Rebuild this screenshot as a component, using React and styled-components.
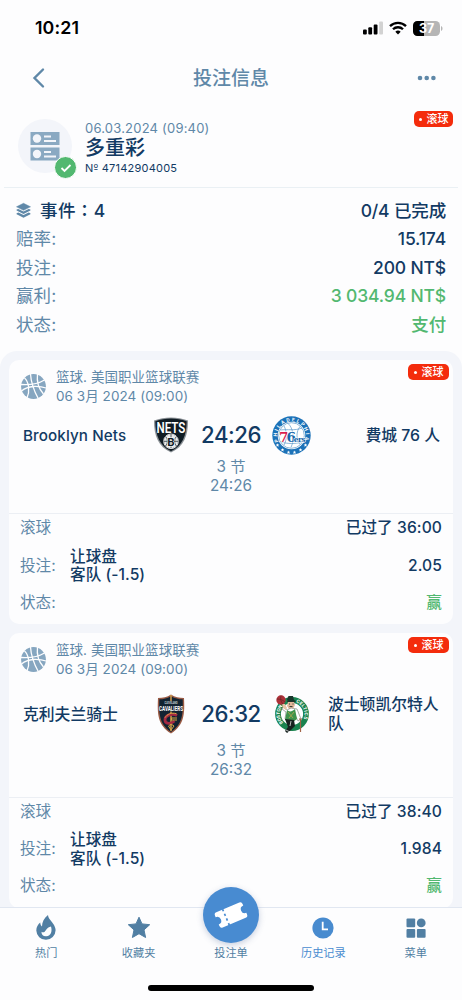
import React from 'react';
import styled, { createGlobalStyle } from 'styled-components';

const GlobalStyle = createGlobalStyle`
  * {
    box-sizing: border-box;
  }
  body {
    margin: 0;
    background: #fdfdfe;
    font-family: Inter, "Noto Sans CJK SC", sans-serif;
    color: #123a63;
    overflow: hidden;
  }
  svg {
    overflow: visible;
  }
`;

const blue = '#5f88a8';
const navy = '#123a63';
const green = '#52b870';

const Screen = styled.div`
  width: 462px;
  height: 1000px;
  display: flex;
  flex-direction: column;
  overflow: hidden;
`;

const StatusBar = styled.div`
  height: 56px;
  flex: none;
  display: flex;
  justify-content: space-between;
  align-items: center;
  padding: 0 19px 0 35px;
  color: #000;
`;

const Clock = styled.span`
  margin-top: -1px;
  font-size: 17.8px;
  font-weight: 600;
  letter-spacing: 0.1px;
`;

const StatusIcons = styled.div`
  display: flex;
  align-items: center;
  gap: 6px;
`;

const NavBar = styled.header`
  height: 44px;
  flex: none;
  display: grid;
  grid-template-columns: 60px 1fr 60px;
  align-items: center;
  padding: 0 25px 0 31px;
  color: ${blue};
`;

const NavTitle = styled.h1`
  margin: 0;
  padding: 2px 6px 0 0;
  font-size: 19px;
  line-height: 28px;
  font-weight: 500;
  text-align: center;
`;

const NavIcon = styled.div`
  display: flex;
  justify-content: ${(p) => (p.$end ? 'flex-end' : 'flex-start')};
`;

const Ticket = styled.section`
  position: relative;
  height: 88px;
  flex: none;
  display: flex;
  gap: 13px;
  margin: 0 4px;
  padding: 19px 14px 0;
  border-bottom: 1.5px solid #eaf0f4;
`;

const Avatar = styled.div`
  position: relative;
  width: 54px;
  height: 54px;
  border-radius: 50%;
  background: #f3f5fa;
  display: flex;
  align-items: center;
  justify-content: center;
`;

const Done = styled.span`
  position: absolute;
  right: -5px;
  bottom: -6px;
  width: 23px;
  height: 23px;
  border: 1.5px solid #fff;
  border-radius: 50%;
  background: ${green};
  display: flex;
  align-items: center;
  justify-content: center;
`;

const TicketDate = styled.div`
  height: 19px;
  line-height: 18px;
  font-size: 13px;
  letter-spacing: 0.2px;
  color: ${blue};
`;

const TicketTitle = styled.div`
  height: 20px;
  line-height: 21px;
  font-size: 20px;
  font-weight: 500;
`;

const TicketNumber = styled.div`
  height: 20px;
  line-height: 20px;
  font-size: 11px;
  letter-spacing: 0.22px;
`;

const Ordinal = styled.span`
  font-family: "DejaVu Sans", sans-serif;
  font-size: 10px;
  line-height: 1;
`;

const LiveBadge = styled.span`
  position: absolute;
  top: ${(p) => p.$top || 4}px;
  right: ${(p) => p.$right || 4}px;
  height: 16px;
  width: ${(p) => p.$width || 41}px;
  border-radius: 5px;
  background: #f42c0c;
  color: #fff;
  display: flex;
  align-items: center;
  justify-content: center;
  gap: 5px;
  font-size: 11px;
  line-height: 16px;
  font-weight: 500;
  &::before {
    content: '';
    width: 3px;
    height: 3px;
    border-radius: 50%;
    background: #fff;
  }
`;

const Summary = styled.section`
  flex: none;
  height: 163px;
  padding: 8.5px 16px 0;
`;

const SummaryRow = styled.div`
  display: flex;
  justify-content: space-between;
  align-items: center;
  height: 28.5px;
  font-size: 17.5px;
  line-height: 28px;
`;

const SummaryLabel = styled.span`
  display: flex;
  align-items: center;
  gap: 9px;
  color: ${(p) => (p.$strong ? navy : blue)};
  font-weight: ${(p) => (p.$strong ? 500 : 400)};
  font-family: Inter, "Noto Sans CJK ${(p) => (p.$strong ? 'TC' : 'SC')}", sans-serif;
  letter-spacing: ${(p) => (p.$strong ? 0.4 : 0.1)}px;
`;

const SummaryValue = styled.span`
  font-weight: 500;
  letter-spacing: -0.15px;
  color: ${(p) => (p.$win ? green : navy)};
`;

const EventList = styled.section`
  flex: none;
  height: 556px;
  overflow: hidden;
  display: flex;
  flex-direction: column;
  gap: 9px;
  padding: 9px 9px 0;
  border-radius: 17px 17px 0 0;
  background: #f3f5fa;
`;

const Card = styled.article`
  position: relative;
  flex: none;
  border-radius: 10px;
  background: #fdfdfe;
`;

const League = styled.div`
  height: 53px;
  display: flex;
  align-items: center;
  gap: 10px;
  padding: 0 12px;
  color: ${blue};
`;

const LeagueText = styled.div`
  font-size: 13.5px;
  line-height: 18.5px;
  letter-spacing: 0.05px;
`;

const Match = styled.div`
  height: ${(p) => (p.$tall ? 56 : 44)}px;
  display: grid;
  grid-template-columns: 140px 43px 78px 43px 1fr;
  align-items: center;
  padding-right: 13px;
`;

const Team = styled.div`
  padding-left: ${(p) => (p.$away ? 15 : 14)}px;
  display: flex;
  justify-content: ${(p) => (p.$away ? 'flex-end' : 'flex-start')};
  line-height: 19px;
  font-weight: 500;
`;

const TeamName = styled.span`
  font-size: ${(p) => (p.$latin ? 15.2 : 15.8)}px;
  letter-spacing: ${(p) => (p.$latin ? 0.1 : 0)}px;
`;

const LogoBox = styled.div`
  display: flex;
  justify-content: center;
`;

const Score = styled.div`
  margin-top: -2px;
  font-size: 22.2px;
  font-weight: 500;
  letter-spacing: -0.5px;
  text-align: center;
  white-space: nowrap;
`;

const Period = styled.div`
  height: ${(p) => (p.$tall ? 54.5 : 56)}px;
  padding-top: ${(p) => (p.$tall ? 0 : 1)}px;
  font-size: 15.3px;
  line-height: 18.5px;
  text-align: center;
  color: ${blue};
`;

const Bet = styled.div`
  height: 111px;
  border-top: 1.5px solid #eceff4;
  padding: 1px 11px 0;
`;

const BetRow = styled.div`
  display: grid;
  grid-template-columns: 50px 1fr auto;
  align-items: center;
  height: ${(p) => p.$height}px;
  font-size: 15.6px;
  line-height: 18.5px;
`;

const BetLabel = styled.span`
  color: ${blue};
  white-space: nowrap;
`;

const BetText = styled.span`
  font-weight: 500;
  letter-spacing: 0.05px;
`;

const BetValue = styled.span`
  font-weight: 500;
  text-align: right;
  letter-spacing: 0.1px;
  color: ${(p) => (p.$win ? green : navy)};
`;

const TabBar = styled.nav`
  flex: none;
  height: 93px;
  display: grid;
  grid-template-columns: repeat(5, 92.4px);
  align-content: start;
  border-top: 1.5px solid #e1e7f1;
  position: relative;
  background: #fdfdfe;
`;

const Tab = styled.div`
  position: relative;
  display: flex;
  flex-direction: column;
  align-items: center;
  color: ${(p) => (p.$active ? '#488bcf' : '#517fa3')};
`;

const TabIcon = styled.div`
  height: 37px;
  padding-top: 2px;
  display: flex;
  align-items: center;
`;

const TabLabel = styled.span`
  font-size: 11.2px;
  line-height: 17px;
`;

const SlipButton = styled.div`
  position: absolute;
  top: -21px;
  left: 18px;
  width: 56px;
  height: 56px;
  border-radius: 50%;
  background: #488bd1;
  box-shadow: 0 2px 6px rgba(72, 100, 150, 0.3);
  display: flex;
  align-items: center;
  justify-content: center;
`;

const HomeIndicator = styled.div`
  position: absolute;
  left: 148px;
  top: 77px;
  width: 166px;
  height: 6px;
  border-radius: 3px;
  background: #000;
`;

const SignalIcon = () => (
  <svg width="20" height="14" viewBox="0 0 20 14">
    <rect x="0" y="8.5" width="3.8" height="5" rx="1" />
    <rect x="5.3" y="6.3" width="3.8" height="7.2" rx="1" />
    <rect x="10.7" y="3.4" width="3.8" height="10.1" rx="1" />
    <rect x="16.2" y="0.5" width="3.8" height="13" rx="1" fill="#d2d2d2" />
  </svg>
);

const WifiIcon = () => (
  <svg width="18" height="14" viewBox="0 0 18 14" fill="none" stroke="#000" strokeWidth="2.3">
    <path d="M1 5.1a11.4 11.4 0 0 1 16 0" />
    <path d="M4 8.3a7.1 7.1 0 0 1 10 0" />
    <path d="M9 13.6 6.3 10.8a3.9 3.9 0 0 1 5.4 0z" fill="#000" stroke="none" />
  </svg>
);

const BatteryIcon = () => (
  <svg width="30" height="15" viewBox="0 0 30 15">
    <rect width="27" height="15" rx="4.5" fill="#b5b5b5" />
    <path d="M4.5 0H11v15H4.5A4.5 4.5 0 0 1 0 10.5v-6A4.5 4.5 0 0 1 4.5 0z" />
    <path d="M28 5c2 .7 2 4.3 0 5z" fill="#b5b5b5" />
    <text x="13.7" y="12" textAnchor="middle" fontSize="12.5" fontWeight="700" fontFamily="Inter" fill="#fff">37</text>
  </svg>
);

const TicketIcon = () => (
  <svg width="30" height="30" viewBox="0 0 30 30" fill="#8aa9c2">
    <rect x="0.5" y="1" width="29" height="13" />
    <rect x="0.5" y="16.5" width="29" height="13" />
    <g fill="#f3f5fa">
      <circle cx="7" cy="7.5" r="4.2" />
      <circle cx="7" cy="23" r="4.2" />
      <path d="M14 4.5h7v2h-7zM14 9h12v2H14zM14 20h7v2h-7zM14 24.5h12v2H14z" />
    </g>
  </svg>
);

const LayersIcon = () => (
  <svg width="15" height="15" viewBox="0 0 15 15" fill={blue}>
    <path d="M7.5.3 14.5 3.8 7.5 7.3.5 3.8z" stroke={blue} strokeWidth=".5" strokeLinejoin="round" />
    <path d="M.6 6.6 2.3 5.9 7.5 8.5l5.2-2.6 1.7.7v1L7.5 11 .6 7.6z" />
    <path d="M.6 10.2l1.7-.8 5.2 2.7 5.2-2.7 1.7.8v1l-6.9 3.5L.6 11.2z" />
  </svg>
);

const BallIcon = () => (
  <svg width="25" height="25" viewBox="0 0 25 25">
    <circle cx="12.5" cy="12.5" r="12.4" fill="#86a6c0" />
    <g fill="none" stroke="#fdfdfe" strokeWidth="1.3">
      <path d="M9.5 0C10 8 13 17 17.500 25" />
      <path d="M0 10.500c7 .5 17-.5 23.500-4.500" />
      <path d="M3.500 4C8 8 9 17 6 24" />
      <path d="M16.500 0c-1 8 1.500 15 6 20" />
      <path d="M.5 17c3-2.500 7-4.200 12-4.500 5-.2 9 .2 12.500 1.500" />
    </g>
  </svg>
);

const NetsLogo = () => (
  <svg width="36" height="36" viewBox="0 0 36 36">
    <path d="M18 .5c6 0 11.5 1 17 3C35 19 31 29.5 18 35.5 5 29.5 1 19 1 3.5 6.5 1.5 12 .5 18 .5z" fill="#8b9196" />
    <path d="M18 1.6c5.500 0 10.500.8 15.700 2.600C33.500 18.500 29.500 28.500 18 34.200 6.500 28.500 2.500 18.500 2.300 4.200 7.500 2.400 12.500 1.600 18 1.600z" fill="#101c24" />
    <text x="3.5" y="11.2" fontFamily="Roboto" fontSize="11" fontWeight="600" textLength="23.500" lengthAdjust="spacingAndGlyphs" fill="#fff" transform="scale(1.230 1.400)" style={{ transformOrigin: '3.500px 0px' }}>NETS</text>
    <circle cx="18" cy="24.300" r="7.300" fill="#101c24" stroke="#fff" strokeWidth=".9" />
    <path d="M11 24.300a7 7 0 0 1 14 0 7 7 0 0 1-14 0" fill="#e8eaeb" />
    <path d="M12.500 19.500c2.500 2 2.500 7 0 9.600M23.500 19.500c-2.500 2-2.500 7 0 9.600M10.800 24.300h14.400M18 17.200v14" stroke="#101c24" strokeWidth=".7" fill="none" />
    <text x="18" y="28.500" textAnchor="middle" fontFamily="Roboto" fontSize="11.500" fontWeight="700" fill="#101c24" stroke="#fff" strokeWidth="1.200" paintOrder="stroke">B</text>
  </svg>
);

const SixersLogo = () => (
  <svg width="39" height="39" viewBox="0 0 39 39">
    <circle cx="19.5" cy="19.5" r="19.2" fill="#1c72b8" />
    <circle cx="19.5" cy="19.5" r="13.8" fill="#fff" />
    <g fill="none" stroke="#5b98c9" strokeWidth=".7">
      <circle cx="19.5" cy="19.5" r="12.8" />
      <path d="M16 7.500c5 4 7 15 3 24M8.500 14c7-1 14 1 21.500-2M9 26c7 2 14 2 21 0M12 10c3 5 3 14 0 19M28 10.500c-4 5-4 13 0 18" />
    </g>
    <path id="sixersArc" d="M6.500 25.500A14.300 14.300 0 1 1 32.500 25.500" fill="none" />
    <text fontFamily="Roboto" fontSize="5" fontWeight="700" fill="#fff">
      <textPath href="#sixersArc" textLength="55">PHILADELPHIA</textPath>
    </text>
    <text x="7" y="25.500" fontFamily="DejaVu Serif" fontSize="13.500" fontWeight="700" fill="#1767ab" stroke="#fff" strokeWidth="1.200" paintOrder="stroke" letterSpacing="-2">
      <tspan fill="#dc1f4e">7</tspan>6<tspan fontSize="7.500" letterSpacing="-.7">ers</tspan>
    </text>
    <g fill="#fff">
      {[[5.5, 29], [10.5, 33.8], [16.5, 36.2], [22.5, 36.2], [28.5, 33.8], [33.5, 29]].map(([x, y]) => (
        <path key={x} transform={`translate(${x} ${y})`} d="M0-1.700.5-.5l1.300.1-1 .8.4 1.300L0 1-1.200 1.700l.4-1.300-1-.8 1.300-.1z" />
      ))}
    </g>
  </svg>
);

const CavsLogo = () => (
  <svg width="28" height="40" viewBox="0 0 28 40">
    <path d="M14 .5c4 2.600 8 3.500 13 3.500.8 16 .5 27-13 35.500C.5 31 .2 20 1 4 6 4 10 3.100 14 .5z" fill="#9a5b45" />
    <path d="M14 2.200c4 2.200 7.500 3 11.700 3.100.5 15-.2 25-11.700 32.600C2.500 30.300 1.800 20.300 2.300 5.300 6.500 5.200 10 4.400 14 2.200z" fill="#122332" />
    <path d="M14 1v6M14 17.500V37" stroke="#d5a04f" strokeWidth="1.500" />
    <text x="7.500" y="10" fontFamily="Roboto" fontSize="3.400" fontWeight="700" textLength="13" lengthAdjust="spacingAndGlyphs" fill="#c9d0d4">CLEVELAND</text>
    <text x="2" y="17" fontFamily="Roboto" fontSize="7.500" fontWeight="700" textLength="24" lengthAdjust="spacingAndGlyphs" fill="#fff">CAVALIERS</text>
    <path d="M20 21.500c-4.500-2.500-12-.5-12 4.500 0 4 5.500 4.500 9.500 1" fill="none" stroke="#a52942" strokeWidth="2.800" />
    <path d="M19.500 19.700c-5-1.500-9.500.5-11.500 4M20 24h-5.500v2H20M11.500 32l2.500-2 3 2-3 4z" fill="none" stroke="#d7a542" strokeWidth="1" />
  </svg>
);

const CelticsLogo = () => (
  <svg width="36" height="39" viewBox="0 0 36 39">
    <circle cx="18" cy="19" r="14" fill="#fff" stroke="#19834f" strokeWidth="5.800" />
    <path id="celticsLeft" d="M9.300 27.700A12.300 12.300 0 0 1 9.300 10.300" fill="none" />
    <path id="celticsRight" d="M22 7.400A12.300 12.300 0 0 1 29 25" fill="none" />
    <g fontFamily="Roboto" fontSize="4.800" fontWeight="700" fill="#fff">
      <text><textPath href="#celticsLeft" textLength="18">BOSTON</textPath></text>
      <text><textPath href="#celticsRight" textLength="20">CELTICS</textPath></text>
    </g>
    <path d="M13 4.500 14.500 1h4.500l1 4 2 1-1 1h-7z" fill="#18382c" />
    <path d="M14 7h6l1 3-2 4h-4l-2-3z" fill="#e2b79a" />
    <path d="M13 6.500h8M15 9h1M18.500 9h1M15.500 11.500h3" stroke="#26342d" strokeWidth=".9" />
    <path d="M9 12l4 3 4-2 6 1 4 10-3 2-3-6-1 5-9-1 1-7-4-3z" fill="#fff" stroke="#555e55" strokeWidth=".5" />
    <path d="M13 15c2 2 5 2 8-1l2 10-4 3-8-2z" fill="#3f944c" />
    <path d="M14 17l5 6M20 17l-5 6" stroke="#b9a54f" strokeWidth=".8" />
    <path d="M11 24l9 1 1 6-4 4-4 3-2-2 3-4z" fill="#17221f" />
    <path d="M17 26l-1 5M12 35l4 2" stroke="#fff" strokeWidth=".7" />
    <path d="M25 24h3M26.500 24v13" stroke="#a26448" strokeWidth="1.200" />
    <path d="M8 9l1 4 3 2 1-2-2-4z" fill="#e6c4a6" />
    <circle cx="7" cy="5" r="4.700" fill="#ac3038" />
    <path d="M3 4c3 0 6 1 8 3M7 .5C6 4 7 7 9 9" fill="none" stroke="#682525" strokeWidth=".7" />
  </svg>
);

const FlameIcon = () => (
  <svg width="20" height="25" viewBox="0 0 20 25" fill="currentColor">
    <path d="M12 0C12.300 4 16 6.200 18 10c1 2 1.600 3.500 1.600 5.300A9.700 9.700 0 0 1 10 24.800 9.600 9.600 0 0 1 .3 15.500C.3 12 2 9.500 4.200 7.500c.2 2 .7 3 1.800 4C6 7 8 3 12 0z" />
    <path d="M15 11.500c1.400 4.500.2 9.400-4.700 9.700-3.300.2-5-2-4.800-4.500 1 .9 2.300.8 3.200 0 1.500-1.400 2-4 6.300-5.200z" fill="#fdfdfe" />
  </svg>
);

const StarIcon = () => (
  <svg width="24" height="23" viewBox="0 0 24 23" fill="currentColor">
    <path d="M12 1.200l3 6.700 7.700.8-5.700 5.200 1.600 7.600L12 17.700l-6.600 3.800L7 13.900 1.300 8.700 9 7.900z" stroke="currentColor" strokeWidth="1" strokeLinejoin="round" />
  </svg>
);

const SlipIcon = () => (
  <svg width="34" height="28" viewBox="0 0 34 28">
    <g transform="rotate(-23 17 14)">
      <path d="M4.500 5.800h25a2.500 2.500 0 0 1 2.500 2.500v1.700a4 4 0 0 0 0 8v1.700a2.500 2.500 0 0 1-2.500 2.500h-25A2.500 2.500 0 0 1 2 19.700V18a4 4 0 0 0 0-8V8.300a2.500 2.500 0 0 1 2.500-2.500z" fill="#fff" />
      <path d="M11.500 5.200v18" stroke="#488bd1" strokeWidth="1.700" strokeDasharray="2.400 2.700" />
    </g>
  </svg>
);

const ClockIcon = () => (
  <svg width="22" height="22" viewBox="0 0 22 22">
    <circle cx="11" cy="11" r="10.600" fill="currentColor" />
    <path d="M10.700 4.800v7.500H16" fill="none" stroke="#fff" strokeWidth="1.800" />
  </svg>
);

const MenuIcon = () => (
  <svg width="20" height="20" viewBox="0 0 20 20" fill="currentColor">
    <rect x=".5" y=".5" width="8.700" height="8.700" rx="1" />
    <circle cx="15.200" cy="4.900" r="4.400" />
    <rect x=".5" y="11" width="8.700" height="8.700" rx="1" />
    <rect x="10.900" y="11" width="8.700" height="8.700" rx="1" />
  </svg>
);

const summary = [
  { label: '赔率:', value: '15.174' },
  { label: '投注:', value: '200 NT$' },
  { label: '赢利:', value: '3 034.94 NT$', win: true },
  { label: '状态:', value: '支付', win: true },
];

const events = [
  {
    home: 'Brooklyn Nets',
    away: '費城 76 人',
    HomeLogo: NetsLogo,
    AwayLogo: SixersLogo,
    score: '24:26',
    elapsed: '已过了 36:00',
    odds: '2.05',
    latin: true,
  },
  {
    home: '克利夫兰骑士',
    away: '波士顿凯尔特人队',
    HomeLogo: CavsLogo,
    AwayLogo: CelticsLogo,
    score: '26:32',
    elapsed: '已过了 38:40',
    odds: '1.984',
    tall: true,
  },
];

const EventCard = ({ event }) => {
  const { HomeLogo, AwayLogo, tall } = event;
  return (
    <Card>
      <LiveBadge>滚球</LiveBadge>
      <League>
        <BallIcon />
        <LeagueText>
          篮球. 美国职业篮球联赛<br />
          06 3月 2024 (09:00)
        </LeagueText>
      </League>
      <Match $tall={tall}>
        <Team><TeamName $latin={event.latin}>{event.home}</TeamName></Team>
        <LogoBox><HomeLogo /></LogoBox>
        <Score>{event.score}</Score>
        <LogoBox><AwayLogo /></LogoBox>
        <Team $away><TeamName>{event.away}</TeamName></Team>
      </Match>
      <Period $tall={tall}>
        3 节<br />
        {event.score}
      </Period>
      <Bet>
        <BetRow $height={27}>
          <BetLabel>滚球</BetLabel>
          <span />
          <BetValue>{event.elapsed}</BetValue>
        </BetRow>
        <BetRow $height={48}>
          <BetLabel>投注:</BetLabel>
          <BetText>让球盘<br />客队 (-1.5)</BetText>
          <BetValue>{event.odds}</BetValue>
        </BetRow>
        <BetRow $height={26}>
          <BetLabel>状态:</BetLabel>
          <span />
          <BetValue $win>赢</BetValue>
        </BetRow>
      </Bet>
    </Card>
  );
};

export default function App() {
  return (
    <Screen>
      <GlobalStyle />
      <StatusBar>
        <Clock>10:21</Clock>
        <StatusIcons>
          <SignalIcon />
          <WifiIcon />
          <BatteryIcon />
        </StatusIcons>
      </StatusBar>

      <NavBar>
        <NavIcon>
          <svg width="14" height="20" viewBox="0 0 14 20" fill="none" stroke={blue} strokeWidth="2.400">
            <path d="M12 1.500 3.500 10l8.500 8.500" strokeLinecap="round" />
          </svg>
        </NavIcon>
        <NavTitle>投注信息</NavTitle>
        <NavIcon $end>
          <svg width="20" height="6" viewBox="0 0 20 6" fill={blue}>
            <circle cx="3" cy="3" r="2.300" />
            <circle cx="9.700" cy="3" r="2.300" />
            <circle cx="16.400" cy="3" r="2.300" />
          </svg>
        </NavIcon>
      </NavBar>

      <Ticket>
        <Avatar>
          <TicketIcon />
          <Done>
            <svg width="12" height="10" viewBox="0 0 12 10" fill="none" stroke="#fff" strokeWidth="1.800">
              <path d="M1.500 5 4.500 8l6-6" />
            </svg>
          </Done>
        </Avatar>
        <div>
          <TicketDate>06.03.2024 (09:40)</TicketDate>
          <TicketTitle>多重彩</TicketTitle>
          <TicketNumber>N<Ordinal>º</Ordinal> 47142904005</TicketNumber>
        </div>
        <LiveBadge $top={11} $right={5} $width={39}>滚球</LiveBadge>
      </Ticket>

      <Summary>
        <SummaryRow>
          <SummaryLabel $strong><LayersIcon />事件：4</SummaryLabel>
          <SummaryValue>0/4 已完成</SummaryValue>
        </SummaryRow>
        {summary.map((row) => (
          <SummaryRow key={row.label}>
            <SummaryLabel>{row.label}</SummaryLabel>
            <SummaryValue $win={row.win}>{row.value}</SummaryValue>
          </SummaryRow>
        ))}
      </Summary>

      <EventList>
        {events.map((event) => (
          <EventCard key={event.home} event={event} />
        ))}
      </EventList>

      <TabBar>
        <Tab>
          <TabIcon><FlameIcon /></TabIcon>
          <TabLabel>热门</TabLabel>
        </Tab>
        <Tab>
          <TabIcon><StarIcon /></TabIcon>
          <TabLabel>收藏夹</TabLabel>
        </Tab>
        <Tab>
          <SlipButton><SlipIcon /></SlipButton>
          <TabIcon />
          <TabLabel>投注单</TabLabel>
        </Tab>
        <Tab $active>
          <TabIcon><ClockIcon /></TabIcon>
          <TabLabel>历史记录</TabLabel>
        </Tab>
        <Tab>
          <TabIcon><MenuIcon /></TabIcon>
          <TabLabel>菜单</TabLabel>
        </Tab>
        <HomeIndicator />
      </TabBar>
    </Screen>
  );
}
